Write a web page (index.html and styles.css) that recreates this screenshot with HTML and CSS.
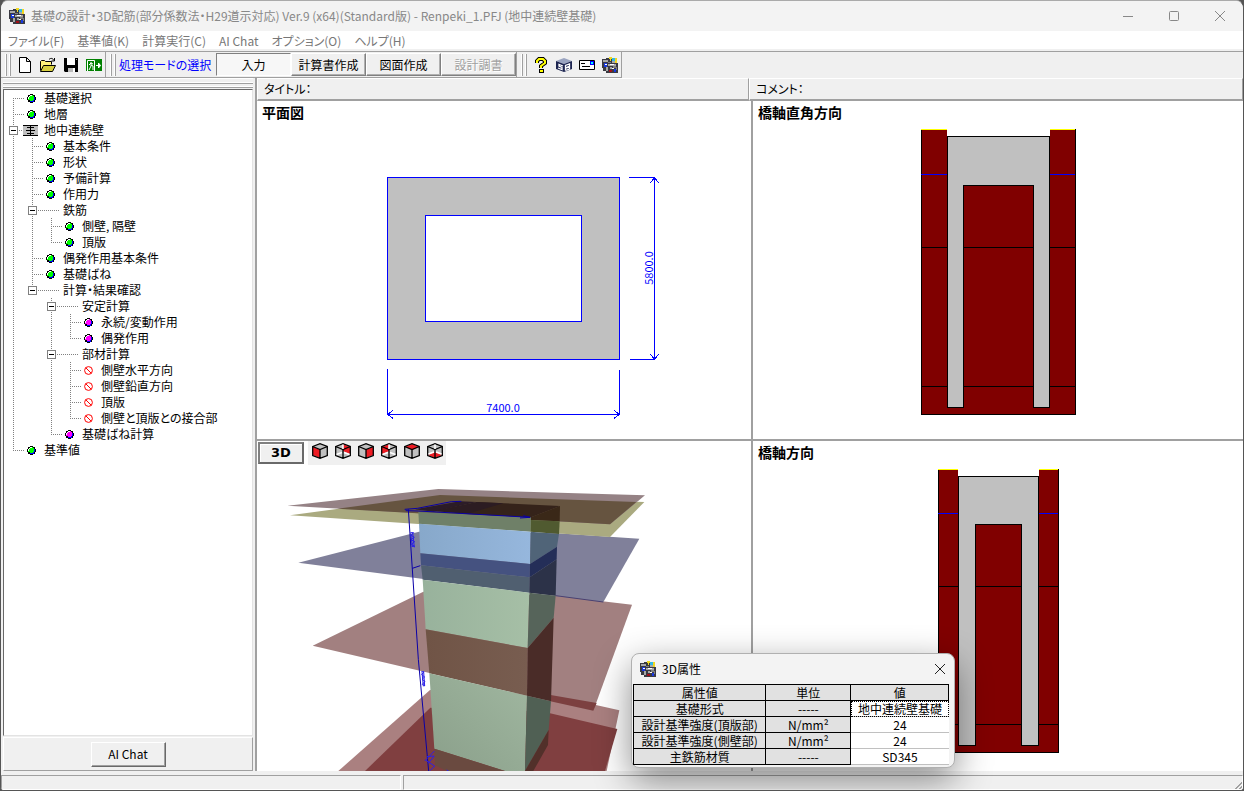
FILE: index.html
```html
<!DOCTYPE html>
<html lang="ja">
<head>
  <meta charset="UTF-8">
  <meta name="viewport" content="width=device-width, initial-scale=1.0">
  <title>基礎の設計・3D配筋</title>
  <link rel="stylesheet" href="styles.css">
</head>
<body>
  <!-- shared icons -->
  <svg class="defs" width="0" height="0">
    <symbol id="app" viewBox="0 0 16 16">
      <path fill="#3a3a42" d="M0 2h4V1h11v5h1v10H4v-2H1v-3H0z"/>
      <path fill="#a8a8a8" d="M1 3h5v2H1zM6 7h8v2H6zM4 10h2v4H4zM8 10h2v2H8zM10 4h3v2h-3z"/>
      <path fill="#f0d820" d="M7 0h3v2H7zM13 1h2v5h-2zM8 2h1v2H8z"/>
      <path fill="#30b8e8" d="M10 1h3v3h-3z"/>
      <path fill="#1838e0" d="M2 6h3v4H2zM12 12h2v3h-2z"/>
      <path fill="#fff" d="M3 7h2v1H3zM8 7h4v1H8zM10 11h2v1h-2z"/>
      <path fill="#a01018" d="M7 13h3v2H7z"/>
      <path fill="#808080" d="M11 9h3v2h-3zM6 5h3v1H6zM14 10h1v3h-1z"/>
    </symbol>
    <symbol id="green" viewBox="0 0 9 9">
      <path d="M3 0h3v1h2v2h1v3H8v2H6v1H3V8H1V6H0V3h1V1h2z"/>
      <path fill="#00f" d="M7 3h1v3H7v2H3V7h3V6h1z"/>
      <path fill="#0f0" d="M3 1h3v1h1v4H6v1H3V6H1V3h2z"/>
      <path fill="#fff" d="M3 1h2v1H3v1H2v2H1V3h1V2h1zM0 0h2v1H1v1H0zM7 0h2v2H8V1H7zM0 7h1v1h1v1H0zM8 7h1v2H7V8h1z"/>
    </symbol>
    <symbol id="purple" viewBox="0 0 9 9">
      <path d="M3 0h3v1h2v2h1v3H8v2H6v1H3V8H1V6H0V3h1V1h2z"/>
      <path fill="#00f" d="M7 3h1v3H7v2H3V7h3V6h1z"/>
      <path fill="#f0f" d="M3 1h3v1h1v4H6v1H3V6H1V3h2z"/>
      <path fill="#fff" d="M3 1h2v1H3v1H2v2H1V3h1V2h1zM0 0h2v1H1v1H0zM7 0h2v2H8V1H7zM0 7h1v1h1v1H0zM8 7h1v2H7V8h1z"/>
    </symbol>
    <symbol id="none" viewBox="0 0 9 9">
      <g fill="none" stroke="red"><circle cx="4.5" cy="4.5" r="3.9"/><path d="M1.8 1.8l5.4 5.4"/></g>
    </symbol>
    <symbol id="cube" viewBox="0 0 16 16">
      <path fill="#c0c0c0" d="M.5 3.500L8 .5l7.500 3v9L8 15.500l-7.500-3z"/>
    </symbol>
    <symbol id="cube-edges" viewBox="0 0 16 16">
      <path fill="none" stroke="#000" stroke-width="1.3" d="M.7 3.500L8 .7l7.300 2.800v9L8 15.300l-7.300-2.800zM.7 3.500L8 6.500l7.300-3M8 6.500v9"/>
    </symbol>
  </svg>

  <div class="window">
    <header class="titlebar">
      <svg class="app-icon"><use href="#app"/></svg>
      <h1>基礎の設計・3D配筋(部分係数法・H29道示対応) Ver.9 (x64)(Standard版) - Renpeki_1.PFJ (地中連続壁基礎)</h1>
      <div class="controls">
        <button aria-label="最小化"><svg viewBox="0 0 10 10"><path d="M0 5.500h10"/></svg></button>
        <button aria-label="最大化"><svg viewBox="0 0 10 10"><rect x=".5" y=".5" width="9" height="9" rx="1"/></svg></button>
        <button aria-label="閉じる"><svg viewBox="0 0 10 10"><path d="M0 0l10 10M10 0L0 10"/></svg></button>
      </div>
    </header>

    <nav class="menu">
      <a href="#">ファイル(F)</a>
      <a href="#">基準値(K)</a>
      <a href="#">計算実行(C)</a>
      <a href="#">AI Chat</a>
      <a href="#">オプション(O)</a>
      <a href="#">ヘルプ(H)</a>
    </nav>

    <div class="toolbar">
      <div class="band band-file">
        <span class="grip"></span>
        <button class="tool" aria-label="新規"><svg viewBox="0 0 16 16"><path fill="#fff" stroke="#000" d="M2.500 .5h7l4 4v11h-11zM9.500 .5v4h4"/></svg></button>
        <button class="tool" aria-label="開く"><svg viewBox="0 0 16 16"><path fill="#fff27a" stroke="#000" d="M.5 13.500v-9l1-1h3l1 1h6v3"/><path fill="#d8d040" stroke="#000" d="M.5 14.500l3-6h12l-3 6z"/><path fill="none" stroke="#000" d="M9 2.500c2-2 4-1 5 1M14.500 1v3h-3"/></svg></button>
        <button class="tool" aria-label="保存"><svg viewBox="0 0 16 16"><path d="M1 1h14v14H2l-1-1z"/><path fill="#fff" d="M4 1h8v7H4zM10 11h2v4h-2z"/><path fill="#bbb" d="M13 2h1v1h-1zM5 11h5v4H5z"/></svg></button>
        <button class="tool" aria-label="終了"><svg viewBox="0 0 16 16"><path fill="#008000" d="M0 2h16v12H0z"/><path fill="none" stroke="#fff" d="M1.500 14V3.500h7V14M5 5v4l-2 4M5 8l2 1v4M3 8l2-2 2 1"/><path stroke="#fff" fill="#fff" d="M10 8.500h4M12.500 6l2 2.500-2 2.500z"/></svg></button>
      </div>
      <div class="band band-mode">
        <span class="grip"></span>
        <span class="mode-label">処理モードの選択</span>
        <button class="mode active">入力</button>
        <button class="mode">計算書作成</button>
        <button class="mode">図面作成</button>
        <button class="mode" disabled>設計調書</button>
      </div>
      <div class="band band-help">
        <span class="grip"></span>
        <button class="tool" aria-label="ヘルプ"><svg viewBox="0 0 16 16"><path fill="none" stroke="#000" stroke-width="4" d="M4 6V4l2-2h4l2 2v2L8 9v2"/><path d="M6 12h5v4H6z"/><path fill="none" stroke="#ff0" stroke-width="2" d="M4 6V4l2-2h4l2 2v2L8 9v2"/><path fill="#ff0" d="M7 13h3v2H7z"/></svg></button>
        <button class="tool" aria-label="ホームページ"><svg viewBox="0 0 16 16"><path fill="#9aa4c0" d="M0 4l8-3 8 3-8 3z"/><path fill="#1c2450" d="M0 4l8 3 8-3v8l-8 3-8-3z"/><path fill="none" stroke="#fff" stroke-width="1.300" d="M7 9L3 7.500v1.500l3 1.500v2L2 11M9.500 13.500V8.500l4-1.500v2l-4 2 4-1v2l-4 1.500"/></svg></button>
        <button class="tool" aria-label="お問い合わせ"><svg viewBox="0 0 16 16"><path fill="#fff" stroke="#000" d="M.5 3.500h15v9H.5z"/><path fill="#00f" d="M11 4h4v4h-4z"/><path fill="#0ff" d="M12 5h2v2h-2z"/><path stroke="#000" d="M2 6.500h4M3 9.500h8"/></svg></button>
        <button class="tool" aria-label="バージョン情報"><svg><use href="#app"/></svg></button>
      </div>
    </div>

    <main>
      <aside>
        <div class="tree-grip"></div>
        <ul class="tree">
          <li><div class="node"><span class="branch"></span><svg><use href="#green"/></svg>基礎選択</div></li>
          <li><div class="node"><span class="branch"></span><svg><use href="#green"/></svg>地層</div></li>
          <li>
            <div class="node"><span class="branch"><button aria-label="折りたたむ"></button></span><svg class="wall" viewBox="0 0 15 11"><path fill="#c0c0c0" d="M0 0h15v11H0z"/><path fill="none" stroke="#000" d="M0 .5h15M3 5.500h9M0 10.500h15M7.500 1v9M4 2.500h7M4 8.500h7"/></svg>地中連続壁</div>
            <ul>
              <li><div class="node"><span class="branch"></span><svg><use href="#green"/></svg>基本条件</div></li>
              <li><div class="node"><span class="branch"></span><svg><use href="#green"/></svg>形状</div></li>
              <li><div class="node"><span class="branch"></span><svg><use href="#green"/></svg>予備計算</div></li>
              <li><div class="node"><span class="branch"></span><svg><use href="#green"/></svg>作用力</div></li>
              <li>
                <div class="node folder"><span class="branch"><button aria-label="折りたたむ"></button></span>鉄筋</div>
                <ul>
                  <li><div class="node"><span class="branch"></span><svg><use href="#green"/></svg>側壁, 隔壁</div></li>
                  <li><div class="node"><span class="branch"></span><svg><use href="#green"/></svg>頂版</div></li>
                </ul>
              </li>
              <li><div class="node"><span class="branch"></span><svg><use href="#green"/></svg>偶発作用基本条件</div></li>
              <li><div class="node"><span class="branch"></span><svg><use href="#green"/></svg>基礎ばね</div></li>
              <li>
                <div class="node folder"><span class="branch"><button aria-label="折りたたむ"></button></span>計算・結果確認</div>
                <ul>
                  <li>
                    <div class="node folder"><span class="branch"><button aria-label="折りたたむ"></button></span>安定計算</div>
                    <ul>
                      <li><div class="node"><span class="branch"></span><svg><use href="#purple"/></svg>永続/変動作用</div></li>
                      <li><div class="node"><span class="branch"></span><svg><use href="#purple"/></svg>偶発作用</div></li>
                    </ul>
                  </li>
                  <li>
                    <div class="node folder"><span class="branch"><button aria-label="折りたたむ"></button></span>部材計算</div>
                    <ul>
                      <li><div class="node"><span class="branch"></span><svg><use href="#none"/></svg>側壁水平方向</div></li>
                      <li><div class="node"><span class="branch"></span><svg><use href="#none"/></svg>側壁鉛直方向</div></li>
                      <li><div class="node"><span class="branch"></span><svg><use href="#none"/></svg>頂版</div></li>
                      <li><div class="node"><span class="branch"></span><svg><use href="#none"/></svg>側壁と頂版との接合部</div></li>
                    </ul>
                  </li>
                  <li><div class="node"><span class="branch"></span><svg><use href="#purple"/></svg>基礎ばね計算</div></li>
                </ul>
              </li>
            </ul>
          </li>
          <li><div class="node"><span class="branch"></span><svg><use href="#green"/></svg>基準値</div></li>
        </ul>
        <div class="chat-bar"><button>AI Chat</button></div>
      </aside>

      <div class="views">
        <div class="caption">タイトル：</div>
        <div class="caption">コメント：</div>

        <section class="pane">
          <h2>平面図</h2>
          <svg class="drawing" viewBox="0 0 494 318">
            <g transform="translate(130 56)" shape-rendering="crispEdges" stroke="#00f" fill="none">
              <path fill="#c0c0c0" fill-rule="evenodd" d="M.5.5h232v182H.5zM38.500 38.500h156v106h-156z"/>
              <path d="M242 .5h25.500v182H243M.5 192v45.500h232V193"/>
              <path d="M263 6l4.500-5 4.500 5M263 177l4.500 5 4.500-5M6 233l-5 4.500 5 4M227 233l5 4.500-5 4"/>
            </g>
            <text x="246" y="291" text-anchor="middle">7400.0</text>
            <text transform="translate(396 147) rotate(-90)" text-anchor="middle">5800.0</text>
          </svg>
        </section>

        <section class="pane">
          <h2>橋軸直角方向</h2>
          <svg class="drawing" viewBox="0 0 490 318">
            <g transform="translate(168 8)" shape-rendering="crispEdges">
              <path fill="maroon" stroke="#000" d="M.5.5v285h154V.5z"/>
              <path fill="#fff" d="M26 0h103v7H26z"/>
              <path stroke="#ff0" d="M0 .5h26M129 .5h25"/>
              <path stroke="#00f" d="M0 45.500h26M129 45.500h25"/>
              <path stroke="#000" d="M0 118.500h154M0 257.500h154"/>
              <path fill="#c0c0c0" stroke="#000" d="M26.500 7.500h102v271h-16V56.500h-70v222h-16z"/>
            </g>
          </svg>
        </section>

        <section class="pane">
          <div class="view-tools">
            <button class="btn-3d">3D</button>
            <div class="cubes">
              <button aria-label="正面"><svg viewBox="0 0 16 16"><use href="#cube"/><path fill="#ee1c24" d="M1 4l7 3v8l-7-3z"/><use href="#cube-edges"/></svg></button>
              <button aria-label="背面"><svg viewBox="0 0 16 16"><use href="#cube"/><path fill="#ee1c24" d="M8 1l7 3v7L8 8z"/><use href="#cube-edges"/><path fill="none" stroke="#fff" stroke-width="1.500" d="M8 1.500V6M1.500 11.500L7 9.500M14.500 11.500L9 9.500"/></svg></button>
              <button aria-label="右面"><svg viewBox="0 0 16 16"><use href="#cube"/><path fill="#ee1c24" d="M15 4L8 7v8l7-3z"/><use href="#cube-edges"/></svg></button>
              <button aria-label="左面"><svg viewBox="0 0 16 16"><use href="#cube"/><path fill="#ee1c24" d="M8 1L1 4v7l7-3z"/><use href="#cube-edges"/><path fill="none" stroke="#fff" stroke-width="1.500" d="M8 1.500V6M1.500 11.500L7 9.500M14.500 11.500L9 9.500"/></svg></button>
              <button aria-label="上面"><svg viewBox="0 0 16 16"><use href="#cube"/><path fill="#ee1c24" d="M1 4l7-3 7 3-7 3z"/><use href="#cube-edges"/></svg></button>
              <button aria-label="下面"><svg viewBox="0 0 16 16"><use href="#cube"/><path fill="#ee1c24" d="M1 12l7-3 7 3-7 3z"/><use href="#cube-edges"/><path fill="none" stroke="#fff" stroke-width="1.500" d="M8 1.500V6M1.500 11L7 9M14.500 11L9 9"/></svg></button>
            </div>
          </div>
          <svg class="drawing" viewBox="21 105 1482 918">
            <defs>
              <linearGradient id="conc" x1="0" x2="1"><stop stop-color="#98b29c"/><stop offset="1" stop-color="#a6bfa6"/></linearGradient>
              <linearGradient id="conc2" x1="0" y1="1" x2="1" y2="0"><stop stop-color="#8a9f8a"/><stop offset="1" stop-color="#a0b7a0"/></linearGradient>
              <linearGradient id="sky" x1="0" x2="1"><stop stop-color="#87a8ca"/><stop offset="1" stop-color="#96b7dd"/></linearGradient>
              <linearGradient id="soil" x1="0" x2="1"><stop stop-color="#705446"/><stop offset="1" stop-color="#785d50"/></linearGradient>
            </defs>
            <!-- soil layers, lowest first -->
            <path fill="#aa8080" d="M265 1023l275-243 340 10 228 51-38 182z"/>
            <path fill="#803f40" d="M345 1023l196-190 340 12 221 52-37 126z"/>
            <path fill="#a28080" d="M188 647l332-162 398 12 228 27-116 318-200-45z"/>
            <path fill="#7c4040" d="M902 795l138 24-10 23-129-28z"/>
            <path fill="#80809a" d="M145 398l362-93 415 5 246 16-108 190-222-28z"/>
            <path stroke="#4a4070" stroke-width="3" d="M917 497l143 19"/>
            <path fill="#aaaa80" d="M120 256l450-61 613 21-103 105z"/>
            <path fill="#958285" d="M112 227l453-50 620 19-105 87z"/>
            <path fill="#665440" d="M262 236l308-41 589 21-79 67z"/>
            <!-- front face -->
            <path fill="#6f8068" d="M505 246l338 16-1 43-335-24z"/>
            <path fill="url(#sky)" d="M507 281l335 24-2 97-329-32z"/>
            <path fill="#455280" d="M511 370l329 32-1 40-326-36z"/>
            <path fill="#505f70" d="M513 406l326 36-1 46-320-39z"/>
            <path fill="url(#conc)" d="M518 449l320 39-5 166-306-56z"/>
            <path fill="url(#soil)" d="M527 598l306 56-2 143-293-67z"/>
            <path fill="url(#conc2)" d="M538 730l293 67-6 226h-60l-212-67z"/>
            <path fill="#6a4a40" d="M553 956l212 67H590l-35-17z"/>
            <!-- side face -->
            <path fill="#3a2818" d="M843 262l87-34-1 46-86-4z"/>
            <path fill="#505a30" d="M843 270l86 4-2 38-85-7z"/>
            <path fill="#506478" d="M842 305l85 7-6 38-81 52z"/>
            <path fill="#242e58" d="M840 402l81-52-1 38-81 54z"/>
            <path fill="#2c3248" d="M839 442l81-54-3 109-79-9z"/>
            <path fill="#56645a" d="M838 488l79 9-6 66-78 91z"/>
            <path fill="#4a2c28" d="M833 654l78-91-8 251-72-17z"/>
            <path fill="#506054" d="M831 797l72 17-7 86-71 123z"/>
            <path fill="#52302a" d="M825 1023l71-123-2 45-44 78z"/>
            <!-- top face -->
            <path fill="#2c1c28" d="M495 238l135-24 50 2-130 29z"/>
            <path fill="#35231a" d="M680 216l250 12-87 34-193-10z"/>
            <path fill="#2c1c22" d="M550 243l130-27 80 4-110 32z"/>
            <!-- dimension lines -->
            <g fill="none" stroke="#0a00a8" stroke-width="3">
              <path d="M464 238l38-3 102-20 30-1M467 242l38 1 336 19M820 257l20 5-30 2"/>
              <path d="M475 238l30 450 31 335M487 415l24-8"/>
            </g>
            <g fill="none" stroke="#2a20e8" stroke-width="3">
              <path d="M481 308h10l-8 8 10 6-10 7 11 6-10 8 10 6h-9M482 310l5 40M488 308l5 44"/>
              <path d="M514 725h8l-7 9 9 7-8 7 9 6-8 9 8 5M516 727l4 42M521 726l3 42"/>
              <path d="M525 992l28-29M526 990l28 18M530 980l22-2M535 1000l18-22M540 1022l14-14M590 1020l6 3"/>
            </g>
          </svg>
        </section>

        <section class="pane">
          <h2>橋軸方向</h2>
          <svg class="drawing" viewBox="0 0 490 310">
            <g transform="translate(185 8)" shape-rendering="crispEdges">
              <path fill="maroon" stroke="#000" d="M.5.5v283h120V.5z"/>
              <path fill="#fff" d="M20 0h81v7H20z"/>
              <path stroke="#ff0" d="M0 .5h20M101 .5h19"/>
              <path stroke="#00f" d="M0 44.500h20M101 44.500h19"/>
              <path stroke="#000" d="M0 117.500h120M0 255.500h120"/>
              <path fill="#c0c0c0" stroke="#000" d="M20.500 7.500h80v269h-17v-221h-46v221h-17z"/>
            </g>
          </svg>
        </section>
      </div>
    </main>

    <footer><span></span><span></span></footer>

    <div class="dialog" role="dialog" aria-labelledby="dialog-title">
      <div class="dialog-bar">
        <svg class="app-icon"><use href="#app"/></svg>
        <h2 id="dialog-title">3D属性</h2>
        <button aria-label="閉じる"><svg viewBox="0 0 10 10"><path d="M0 0l10 10M10 0L0 10"/></svg></button>
      </div>
      <table>
        <thead>
          <tr><th>属性値</th><th>単位</th><th>値</th></tr>
        </thead>
        <tbody>
          <tr><th>基礎形式</th><th>-----</th><td class="focus">地中連続壁基礎</td></tr>
          <tr><th>設計基準強度(頂版部)</th><th>N/mm²</th><td>24</td></tr>
          <tr><th>設計基準強度(側壁部)</th><th>N/mm²</th><td>24</td></tr>
          <tr><th>主鉄筋材質</th><th>-----</th><td>SD345</td></tr>
        </tbody>
      </table>
    </div>
  </div>
</body>
</html>
```
FILE: styles.css
```css
* {
  box-sizing: border-box;
}
body {
  margin: 0;
  background: #555;
  color: #000;
  font: 12px/16px "Noto Sans CJK JP", sans-serif;
  font-feature-settings: "palt";
}
button {
  font: inherit;
  font-feature-settings: inherit;
  color: inherit;
  padding: 0;
  border: none;
  background: none;
}
svg {
  display: block;
}
.defs {
  position: absolute;
}
.window {
  position: relative;
  display: flex;
  flex-direction: column;
  height: 100vh;
  min-height: 560px;
  border: 1px solid #555;
  border-top-color: #aaa;
  border-radius: 8px 8px 4px 4px;
  background: #f0f0f0;
  overflow: hidden;
}

/* title bar and menu */
.titlebar {
  display: flex;
  align-items: center;
  height: 30px;
  padding-left: 8px;
  background: #f3f3f3;
  color: #888;
}
.titlebar h1 {
  flex: 1;
  margin: 0 0 0 6px;
  font-size: 12px;
  font-weight: normal;
  white-space: nowrap;
}
.app-icon {
  width: 16px;
  height: 16px;
}
.controls {
  display: flex;
}
.controls button {
  width: 46px;
  height: 30px;
  display: grid;
  place-items: center;
}
.controls svg, .dialog-bar button svg {
  width: 10px;
  height: 10px;
  fill: none;
  stroke: #888;
  overflow: visible;
}
.menu {
  display: flex;
  gap: 13px;
  height: 20px;
  padding: 2px 7px 0;
  background: #fff;
  border-bottom: 2px solid #f0f0f0;
}
.menu a {
  color: #777;
  text-decoration: none;
  white-space: nowrap;
}

/* toolbar */
.toolbar {
  display: flex;
  height: 27px;
  border-top: 1px solid #a0a0a0;
}
.band {
  display: flex;
  align-items: center;
  padding-left: 4px;
  border-right: 1px solid #a0a0a0;
  border-bottom: 1px solid #a0a0a0;
}
.band-file {
  width: 105px;
}
.band-mode {
  width: 411px;
}
.band-help {
  width: 105px;
}
.grip {
  width: 6px;
  height: 22px;
  margin-right: 3px;
  background: linear-gradient(to right, #fff 0 1px, #a0a0a0 1px 2px, #f0f0f0 2px 4px, #fff 4px 5px, #a0a0a0 5px 6px);
}
.tool {
  width: 23px;
  height: 22px;
  display: grid;
  place-items: center;
}
.tool svg {
  width: 16px;
  height: 16px;
}
.mode-label {
  flex: 1;
  color: #00f;
  white-space: nowrap;
}
.mode {
  width: 75px;
  height: 23px;
  border: 1px solid;
  border-color: #fff #808080 #808080 #fff;
  box-shadow: inset -1px -1px #b0b0b0;
  white-space: nowrap;
}
.mode.active {
  border-color: #808080 #fff #fff #808080;
  box-shadow: none;
  background: #f7f7f7;
}
.mode:disabled {
  color: #a0a0a0;
  text-shadow: 1px 1px #fff;
}

/* main area */
main {
  flex: 1;
  display: grid;
  grid-template-columns: 256px 1fr;
  min-height: 0;
}
aside {
  display: flex;
  flex-direction: column;
  min-height: 0;
  padding: 0 2px;
  border-right: 2px solid #a0a0a0;
}
.tree-grip {
  height: 11px;
  background: linear-gradient(#fff 0 1px, #f0f0f0 1px 4px, #fff 4px 5px, #a0a0a0 5px 6px, #f0f0f0 6px 8px, #fff 8px 9px, #a0a0a0 9px 10px, #f0f0f0 10px);
}
.tree {
  flex: 1;
  min-height: 0;
  overflow: hidden;
  border: 1px solid;
  border-color: #696969 #e3e3e3 #e3e3e3 #696969;
  background: #fff;
}
.tree, .tree ul {
  list-style: none;
  margin: 0;
  padding: 0;
}
.tree ul {
  margin-left: 19px;
}
.tree li {
  background: repeating-linear-gradient(#808080 0 1px, transparent 1px 2px) 9px 0 / 1px 100% no-repeat;
}
.tree li:last-child {
  background-size: 1px 8px;
}
.tree > li:first-child {
  background-position: 9px 8px;
}
.node {
  display: flex;
  align-items: center;
  height: 16px;
  white-space: nowrap;
  background: repeating-linear-gradient(to right, #808080 0 1px, transparent 1px 2px) 9px 8px / 11px 1px no-repeat;
}
.node.folder {
  background-size: 28px 1px;
}
.node svg {
  width: 9px;
  height: 9px;
  margin: 0 8px 0 5px;
}
.node svg.wall {
  width: 15px;
  height: 11px;
  margin: 0 6px 0 1px;
}
.branch {
  width: 18px;
}
.folder .branch {
  width: 40px;
}
.branch button {
  display: block;
  width: 9px;
  height: 9px;
  margin-left: 5px;
  border: 1px solid #808080;
  background: linear-gradient(#000, #000) center / 5px 1px no-repeat #fff;
}
.chat-bar {
  display: grid;
  place-items: center;
  height: 34px;
  margin-top: 1px;
  border: 1px solid;
  border-color: #fff #a0a0a0 #a0a0a0 #fff;
}
.chat-bar button {
  width: 75px;
  height: 25px;
  border: 1px solid;
  border-color: #fff #696969 #696969 #fff;
  box-shadow: inset -1px -1px #a0a0a0;
}

/* drawing panes */
.views {
  display: grid;
  grid-template-columns: 496fr 490fr;
  grid-template-rows: 23px 340fr 330fr;
  min-width: 0;
  min-height: 0;
}
.caption {
  padding: 2px 6px;
  border: 1px solid;
  border-color: #fff #a0a0a0 #a0a0a0 #fff;
  border-bottom-width: 2px;
}
.caption:first-child {
  margin-right: 4px;
}
.caption:nth-child(2) {
  margin-left: -4px;
}
.pane {
  display: flex;
  flex-direction: column;
  min-width: 0;
  min-height: 0;
  background: #fff;
}
.pane:nth-child(odd) {
  border-right: 2px solid #a0a0a0;
}
.pane:nth-child(-n+4) {
  border-bottom: 2px solid #a0a0a0;
}
.pane h2 {
  height: 20px;
  margin: 0;
  padding: 3px 5px 0;
  font-size: 14px;
  line-height: 16px;
}
.drawing {
  flex: 1;
  width: 100%;
  min-height: 0;
}
.drawing text {
  font-size: 11px;
  fill: #00f;
}
.view-tools {
  display: flex;
  gap: 4px;
  height: 24px;
}
.btn-3d {
  width: 46px;
  height: 22px;
  margin: 1px 0 0 1px;
  border: 2px solid;
  border-color: #808080 #696969 #696969 #808080;
  box-shadow: inset 1px 1px #fff;
  background: #f0f0f0;
  font-family: "DejaVu Sans", sans-serif;
  font-size: 13px;
  font-weight: bold;
}
.cubes {
  display: flex;
  background: #f0f0f0;
}
.cubes button {
  width: 23px;
  height: 20px;
  display: grid;
  place-items: center;
}
.cubes svg {
  width: 16px;
  height: 16px;
}

/* status bar */
footer {
  display: grid;
  grid-template-columns: 400px 1fr;
  gap: 2px;
  height: 19px;
  padding-top: 4px;
}
footer span {
  border: 1px solid;
  border-color: #a0a0a0 #fff #fff #a0a0a0;
}
footer span:last-child {
  background: linear-gradient(135deg, #f0f0f0 50%, transparent 50%) right bottom / 10px 10px no-repeat,
    repeating-linear-gradient(135deg, #a0a0a0 0 1px, #f0f0f0 1px 3px) right bottom / 10px 10px no-repeat;
}

/* attribute window */
.dialog {
  position: absolute;
  right: 288px;
  bottom: 22px;
  width: 324px;
  padding: 0 5px 2px 1px;
  border: 1px solid #b0b0b0;
  border-radius: 8px;
  background: #f3f3f3;
  box-shadow: 0 12px 36px rgba(0, 0, 0, 0.45);
}
.dialog-bar {
  display: flex;
  align-items: center;
  height: 30px;
  padding: 0 4px 0 7px;
}
.dialog-bar h2 {
  flex: 1;
  margin: 0 0 0 6px;
  font-size: 12px;
  font-weight: normal;
}
.dialog-bar button svg {
  stroke: #222;
}
.dialog table {
  width: 100%;
  table-layout: fixed;
  border-collapse: collapse;
  border-top: 1px solid #696969;
  text-align: center;
  line-height: 15px;
  background: #fff;
}
.dialog th, .dialog td {
  height: 16px;
  padding: 0;
  font-weight: normal;
  white-space: nowrap;
  border-bottom: 1px solid #c0c0c0;
}
.dialog th {
  width: 42%;
  background: #e1e1e1;
  border: 1px solid #000;
}
.dialog th:nth-child(2) {
  width: 27%;
}
.dialog thead th:last-child {
  width: 31%;
}
.dialog td.focus {
  outline: 1px dotted #000;
  outline-offset: -1px;
}
```
